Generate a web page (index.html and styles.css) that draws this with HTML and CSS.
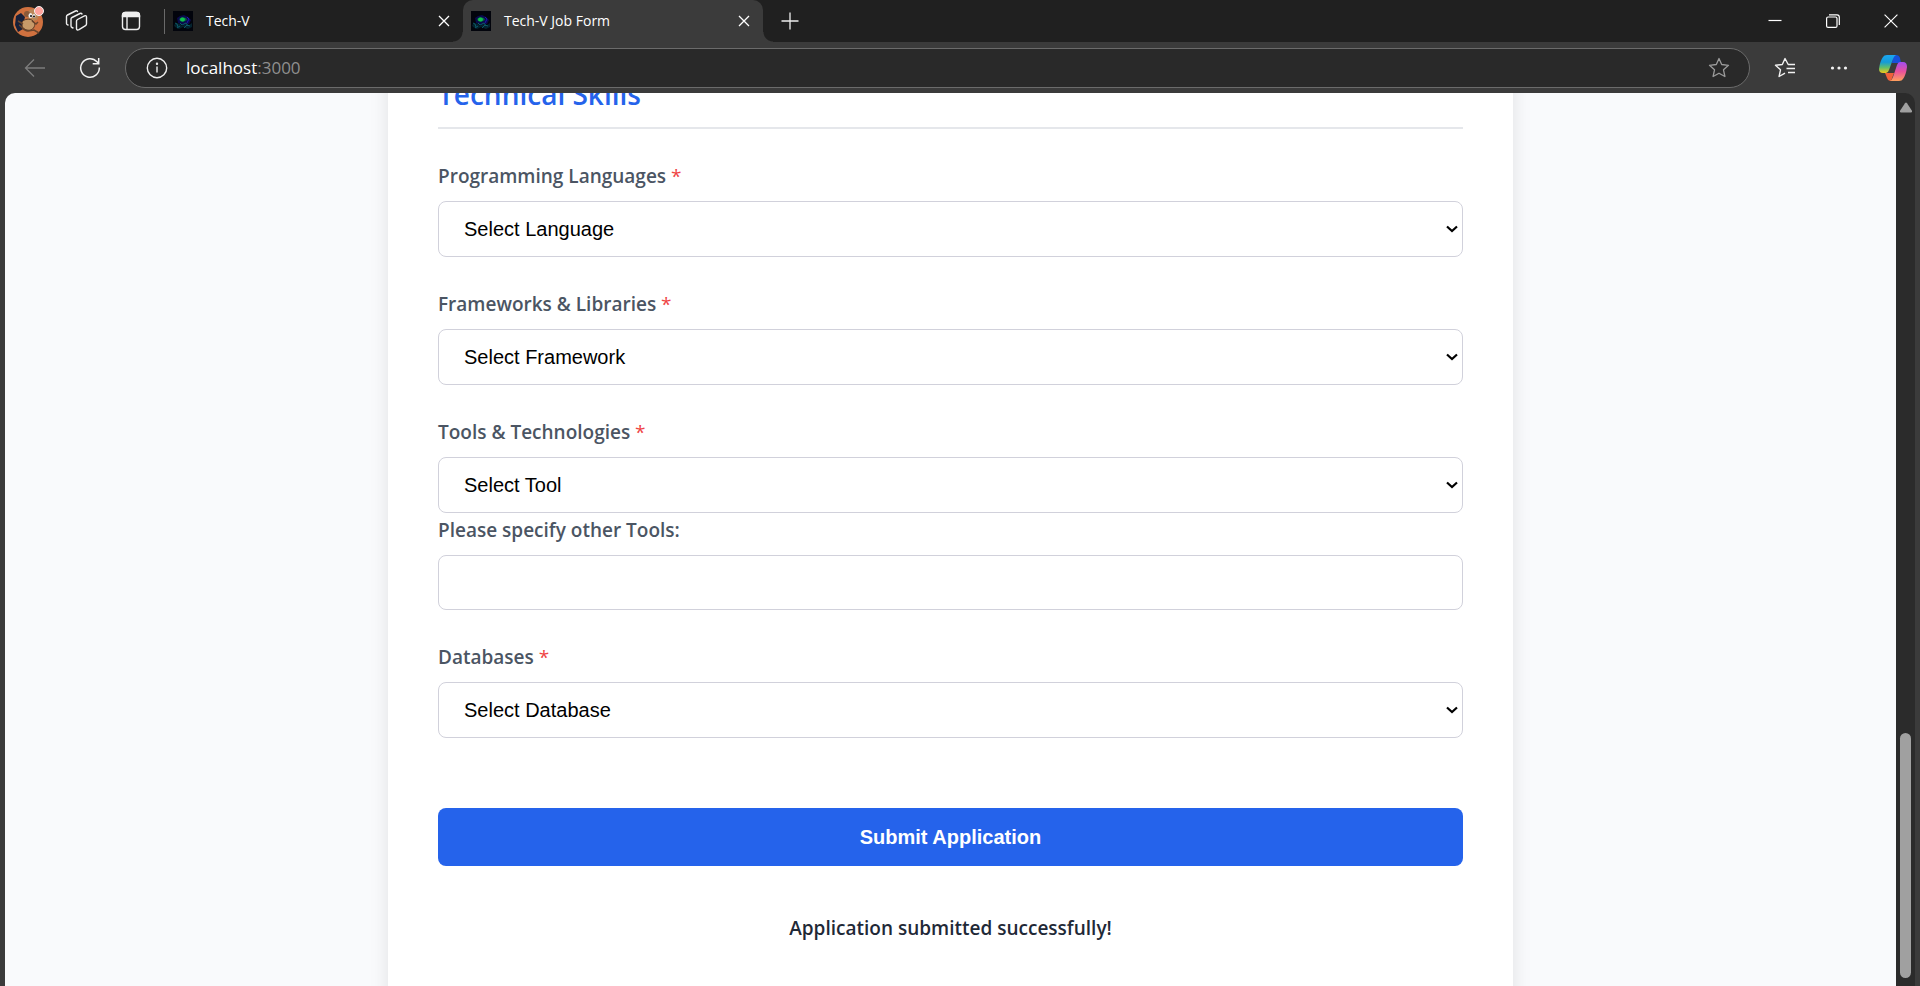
FILE: index.html
```html
<!DOCTYPE html>
<html lang="en">
<head>
<meta charset="utf-8">
<title>Tech-V Job Form</title>
<link rel="stylesheet" href="styles.css">
</head>
<body>
<svg class="defs" aria-hidden="true">
  <defs>
    <symbol id="favicon" viewBox="0 0 20 20">
      <rect width="20" height="20" fill="#02040c"/>
      <path d="M4 7 7 5l4-1 4 2 3 3-2 4-6 1-5-2z" fill="#0a0a4c"/>
      <path d="M1 14l3-2 3 1 2 2 4-2 3 1 3-2v4l-4 2-5-2-4 2-4-2z" fill="#04222e"/>
      <path d="M2 12l2 1 1 3M7 12l2 2 4-2 2 3M4 17l3-2M11 17l3-3 3 1" stroke="#0a5a68" fill="none"/>
      <path d="M6 8l3-2 4 1 1 2-4 2-3-1z" fill="#0a5a48"/>
      <ellipse cx="9.500" cy="8.500" rx="2.500" ry="2" fill="#10c24c"/>
      <path d="M14 6l2 2-2 4" stroke="#2018b0" fill="none"/>
    </symbol>
    <symbol id="cross" viewBox="0 0 12 12"><path d="M1 1l10 10M11 1L1 11" fill="none" stroke="currentColor" stroke-width="1.3"/></symbol>
    <symbol id="chevron" viewBox="0 0 12 8"><path d="M1 1.500l5 4.500 5-4.500" fill="none" stroke="#000" stroke-width="2.200"/></symbol>
  </defs>
</svg>

<header class="browser">
  <div class="tab-strip">
    <button class="icon-btn profile" aria-label="Profile">
      <svg width="32" height="32" viewBox="0 0 32 32">
        <circle cx="16" cy="17" r="15" fill="#d0713f"/>
        <path d="M4 11l5-3 4 4-1 4 3 4-4 4-5 3-3-7z" fill="#17203a"/>
        <circle cx="21" cy="10" r="6" fill="#b98758"/>
        <circle cx="15" cy="9" r="3" fill="#8a5a3a"/>
        <path d="M10 17c2-3 8-4 11-1 3 2 2 7-2 9-4 1-9-1-9-5z" fill="#c79a69" stroke="#5b3a26"/>
        <path d="M7 20c3 1 4 6 9 6l6-1 5 3M20 16l4 3 2-2M6 16l5 3" fill="none" stroke="#6a452c" stroke-width="1.500"/>
        <ellipse cx="18.500" cy="10.500" rx="2" ry="2.500" fill="#eee"/>
        <ellipse cx="22" cy="11" rx="1.500" ry="2" fill="#eee"/>
        <circle cx="19" cy="11" r="1" fill="#111"/><circle cx="22" cy="11.500" r="1" fill="#111"/>
        <circle cx="27" cy="6" r="4.500" fill="#ffa39c" stroke="#f4f4f4" stroke-width="1"/>
      </svg>
    </button>
    <button class="icon-btn" aria-label="Workspaces">
      <svg width="24" height="24" viewBox="0 0 24 24" fill="none" stroke="#eee" stroke-width="1.400" stroke-linejoin="round" stroke-linecap="round">
        <path d="M12.500 10.500l7-3.700q2-.7 2 1.300v7q0 1-1 1.600l-6.500 4q-2.500 1-2.500-1.300v-7.300q0-1 1-1.600z"/>
        <path d="M8 19l-1-.5q-1-.5-1-1.500V10q0-1 1-1.500l8-4q1.300-.5 2 .5"/>
        <path d="M3 16q-1.500-.5-1.500-1.500V7.500q0-1 1-1.500L10.500 2q1.300-.5 2 .4"/>
      </svg>
    </button>
    <button class="icon-btn" aria-label="Tab actions menu">
      <svg width="20" height="20" viewBox="0 0 20 20" fill="none" stroke="#eee" stroke-width="1.400">
        <rect x="1.500" y="1.500" width="17" height="17" rx="3"/>
        <path d="M1.500 5.500v-1q0-3 3-3h11q3 0 3 3v1z" fill="#eee"/>
        <path d="M6 6v12.500"/>
      </svg>
    </button>
    <span class="divider"></span>
    <div class="tab">
      <svg class="favicon"><use href="#favicon"/></svg>
      <span class="tab-title">Tech-V</span>
      <button class="tab-close" aria-label="Close Tech-V"><svg width="12" height="12"><use href="#cross"/></svg></button>
    </div>
    <div class="tab tab-active">
      <svg class="favicon"><use href="#favicon"/></svg>
      <span class="tab-title">Tech-V Job Form</span>
      <button class="tab-close" aria-label="Close Tech-V Job Form"><svg width="12" height="12"><use href="#cross"/></svg></button>
    </div>
    <button class="icon-btn new-tab" aria-label="New tab">
      <svg width="18" height="18" viewBox="0 0 18 18"><path d="M9 .5v17M.5 9h17" stroke="#eee" stroke-width="1.300"/></svg>
    </button>
    <div class="window-controls">
      <button class="window-btn" aria-label="Minimize"><svg width="14" height="14" viewBox="0 0 14 14"><path d="M.5 6.500h13" stroke="#fff" stroke-width="1.200"/></svg></button>
      <button class="window-btn" aria-label="Restore"><svg width="14" height="14" viewBox="0 0 14 14" fill="none" stroke="#fff" stroke-width="1.200"><rect x=".6" y="3" width="10.400" height="10.400" rx="1.500"/><path d="M3 .8h8q2.300 0 2.300 2.300V11"/></svg></button>
      <button class="window-btn" aria-label="Close"><svg width="14" height="14" viewBox="0 0 12 12"><path d="M.5.5l11 11M11.500.5L.5 11.500" stroke="#fff" fill="none"/></svg></button>
    </div>
  </div>

  <div class="toolbar">
    <button class="icon-btn" aria-label="Back">
      <svg width="22" height="20" viewBox="0 0 22 20"><path d="M21 10H1.500M10 1.500L1.500 10l8.500 8.500" fill="none" stroke="#7c7c7c" stroke-width="1.300"/></svg>
    </button>
    <button class="icon-btn refresh" aria-label="Refresh">
      <svg width="22" height="22" viewBox="0 0 22 22"><path d="M20.300 10.500A9.300 9.300 0 1 1 18 4.800L19.500 6.500M19.700 1v5.800h-6" fill="none" stroke="#f2f2f2" stroke-width="1.500"/></svg>
    </button>
    <div class="address">
      <svg width="22" height="22" viewBox="0 0 22 22" fill="none" stroke="#eee" stroke-width="1.400"><circle cx="11" cy="11" r="9.700"/><path d="M11 9.500v6"/><circle cx="11" cy="6.700" r=".5"/></svg>
      <span class="url">localhost<span class="port">:3000</span></span>
      <button class="icon-btn star" aria-label="Add to favorites">
        <svg width="22" height="22" viewBox="0 0 22 22"><path d="M11 1.500l2.700 6 6.800.8-5 4.500 1.400 6.700-5.900-3.300-5.900 3.300 1.400-6.700-5-4.500 6.800-.8z" fill="none" stroke="#9b9b9b" stroke-width="1.300" stroke-linejoin="round"/></svg>
      </button>
    </div>
    <button class="icon-btn" aria-label="Favorites">
      <svg width="22" height="22" viewBox="0 0 22 22" fill="none" stroke="#f2f2f2" stroke-width="1.400" stroke-linejoin="round"><path d="M20.500 7.500h-6.300L11 1.500 8.300 7.500l-6.800.8 5 4.500-1.400 6.700 5.900-3.300M14 7.500h7M12.500 11.500h8.500M14 15.500h7" /></svg>
    </button>
    <button class="icon-btn" aria-label="Settings and more">
      <svg width="18" height="6" viewBox="0 0 18 6" fill="#f2f2f2"><circle cx="2.500" cy="3" r="1.600"/><circle cx="9" cy="3" r="1.600"/><circle cx="15.500" cy="3" r="1.600"/></svg>
    </button>
    <button class="icon-btn" aria-label="Copilot">
      <svg width="28" height="26" viewBox="0 0 28 26">
        <defs>
          <linearGradient id="cool" x1="0" y1="0" x2="0" y2="1"><stop offset="0" stop-color="#1ba6f0"/><stop offset=".4" stop-color="#159bd8"/><stop offset=".7" stop-color="#62bf6a"/><stop offset="1" stop-color="#f2c81a"/></linearGradient>
          <linearGradient id="warm" x1="0" y1="0" x2="0" y2="1"><stop offset="0" stop-color="#a24df0"/><stop offset=".5" stop-color="#e9519c"/><stop offset="1" stop-color="#ffa05c"/></linearGradient>
        </defs>
        <path d="M14 0h3q3 0 4 3l1 5h-9z" fill="#1750d8"/>
        <path d="M6 18h9l-3 8q-3 0-4-3z" fill="#f0603a"/>
        <path d="M8 0h9q-2 1-3 4l-4 11q-1 3-3 3H4q-4 0-4-4Q1 6 4 2q1-2 4-2z" fill="url(#cool)"/>
        <path d="M21 7h3q4 0 4 5-1 8-4 12-1 2-4 2h-9q2-1 3-4l4-12q1-3 3-3z" fill="url(#warm)"/>
      </svg>
    </button>
  </div>
</header>

<div class="viewport">
  <main class="page">
    <form class="card">
      <h2 class="section-title">Technical Skills</h2>

      <div class="group">
        <label class="label" for="language">Programming Languages <span class="required">*</span></label>
        <div class="select-wrap">
          <select class="control" id="language"><option>Select Language</option></select>
          <svg class="chevron"><use href="#chevron"/></svg>
        </div>
      </div>

      <div class="group">
        <label class="label" for="framework">Frameworks &amp; Libraries <span class="required">*</span></label>
        <div class="select-wrap">
          <select class="control" id="framework"><option>Select Framework</option></select>
          <svg class="chevron"><use href="#chevron"/></svg>
        </div>
      </div>

      <div class="group">
        <label class="label" for="tool">Tools &amp; Technologies <span class="required">*</span></label>
        <div class="select-wrap">
          <select class="control" id="tool"><option>Select Tool</option></select>
          <svg class="chevron"><use href="#chevron"/></svg>
        </div>
        <label class="label" for="other-tools">Please specify other Tools:</label>
        <input class="control text-input" id="other-tools" type="text">
      </div>

      <div class="group">
        <label class="label" for="database">Databases <span class="required">*</span></label>
        <div class="select-wrap">
          <select class="control" id="database"><option>Select Database</option></select>
          <svg class="chevron"><use href="#chevron"/></svg>
        </div>
      </div>

      <button class="submit" type="button">Submit Application</button>
      <p class="message" role="status">Application submitted successfully!</p>
    </form>
  </main>
  <div class="scrollbar">
    <svg width="14" height="12" viewBox="0 0 14 12"><path d="M6 1.200q1-1.400 2 0l4.800 7.300q.9 2-1 2H2.200q-1.900 0-1-2z" fill="#a0a0a0"/></svg>
    <span class="thumb"></span>
  </div>
</div>
</body>
</html>
```

FILE: styles.css
```css
* {
  box-sizing: border-box;
}

body {
  margin: 0;
  height: 100vh;
  display: flex;
  flex-direction: column;
  overflow: hidden;
  background: #3b3b3b;
  font-family: "Segoe UI", "Open Sans", "Noto Sans", sans-serif;
}

button {
  border: 0;
  padding: 0;
  background: none;
  color: inherit;
}

svg {
  display: block;
  flex: none;
}

.defs {
  position: absolute;
  width: 0;
  height: 0;
}

/* Browser frame */

.browser {
  flex: none;
  color: #fff;
}

.tab-strip {
  display: flex;
  align-items: center;
  height: 42px;
  background: #202020;
}

.icon-btn {
  display: grid;
  place-items: center;
  flex: none;
  width: 54px;
  height: 40px;
}

.profile {
  width: 50px;
  padding-left: 6px;
}

.divider {
  width: 1px;
  height: 25px;
  margin-left: 6px;
  background: #6a6a6a;
}

.tab {
  position: relative;
  display: flex;
  align-items: center;
  width: 298px;
  height: 42px;
  padding: 0 9px 0 8px;
}

.tab-active {
  width: 300px;
  background: #3b3b3b;
  border-radius: 10px 10px 0 0;
}

.tab-active::before,
.tab-active::after {
  content: "";
  position: absolute;
  bottom: 0;
  width: 10px;
  height: 10px;
}

.tab-active::before {
  right: 100%;
  background: radial-gradient(circle at 0 0, #202020 9px, #3b3b3b 10px);
}

.tab-active::after {
  left: 100%;
  background: radial-gradient(circle at 100% 0, #202020 9px, #3b3b3b 10px);
}

.favicon {
  width: 20px;
  height: 20px;
}

.tab-title {
  flex: 1;
  margin-left: 13px;
  font-size: 14px;
  line-height: 20px;
}

.tab-close {
  display: grid;
  place-items: center;
  width: 20px;
  height: 20px;
}

.window-controls {
  display: flex;
  margin-left: auto;
}

.window-btn {
  display: grid;
  place-items: center;
  width: 58px;
  height: 42px;
}

.toolbar {
  display: flex;
  align-items: center;
  height: 51px;
  padding: 0 0 0 8px;
}

.refresh {
  width: 56px;
}

.address {
  display: flex;
  flex: 1;
  align-items: center;
  height: 40px;
  margin: 0 8px 0 7px;
  padding: 0 3px 0 20px;
  border: 1px solid #6b6b6b;
  border-radius: 20px;
  background: #292929;
}

.url {
  flex: 1;
  margin-left: 18px;
  font-size: 17px;
  line-height: 24px;
}

.port {
  color: #8f8f8f;
}

/* Page area */

.viewport {
  display: flex;
  flex: 1;
  min-height: 0;
  margin: 0 5px;
  border-radius: 10px 10px 0 0;
  overflow: hidden;
}

.page {
  flex: 1;
  overflow: hidden;
  background: #f9fafc;
}

.card {
  max-width: 1125px;
  min-height: 100%;
  margin: -34px auto 0;
  padding: 0 50px 60px;
  background: #fff;
  box-shadow: 0 5px 18px rgba(0, 0, 0, 0.1);
}

.section-title {
  margin: 0 0 30px;
  padding: 16px 0 14px;
  border-bottom: 2px solid #e5e7eb;
  color: #2563eb;
  font-size: 28px;
  font-weight: 600;
  line-height: 38px;
}

.group {
  margin-bottom: 30px;
}

.label {
  display: block;
  margin-bottom: 8px;
  color: #4b5563;
  font-size: 19px;
  font-weight: 600;
  line-height: 34px;
}

.required {
  color: #ef4444;
  font-weight: 400;
}

.select-wrap {
  display: grid;
  align-items: center;
}

.control {
  grid-area: 1 / 1;
  width: 100%;
  height: 56px;
  padding: 0 25px;
  border: 1px solid #d1d1db;
  border-radius: 8px;
  background: #fff;
  color: #000;
  font-family: "Liberation Sans", Arial, sans-serif;
  font-size: 20px;
  appearance: none;
}

.text-input {
  display: block;
  height: 55px;
}

.chevron {
  grid-area: 1 / 1;
  justify-self: end;
  width: 12px;
  height: 8px;
  margin-right: 5px;
  pointer-events: none;
}

.submit {
  display: block;
  width: 100%;
  height: 58px;
  margin-top: 70px;
  border-radius: 8px;
  background: #2563eb;
  color: #fff;
  font-family: "Liberation Sans", Arial, sans-serif;
  font-size: 20px;
  font-weight: 700;
}

.message {
  margin: 45px 0 0;
  color: #1f2937;
  font-size: 19px;
  font-weight: 600;
  line-height: 34px;
  text-align: center;
}

.scrollbar {
  display: flex;
  flex-direction: column;
  align-items: center;
  justify-content: space-between;
  width: 19px;
  padding: 9px 0 8px;
  background: #2b2b2b;
}

.thumb {
  width: 11px;
  height: 245px;
  border-radius: 6px;
  background: #a0a0a0;
}
```
